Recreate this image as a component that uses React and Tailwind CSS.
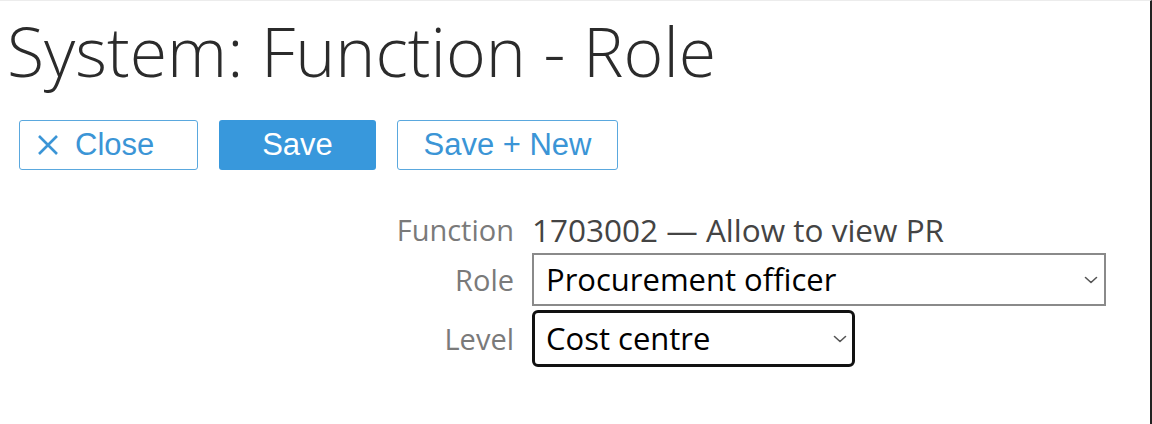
import React from 'react';

const Chevron = () => (
    <svg width="14" height="8" viewBox="0 0 14 8" fill="none" className="pointer-events-none absolute right-[8px] top-1/2 -translate-y-1/2">
        <path d="M1.5 1.5 L7 6.5 L12.5 1.5" stroke="#555" strokeWidth="1.6" strokeLinecap="round" strokeLinejoin="round" />
    </svg>
);

const App = () => {
    return (
        <div className="w-[1152px] h-[424px] bg-white border-t border-[#ececec] border-r-2 border-r-[#222] overflow-hidden relative">
            {/* Title */}
            <h1 className="ml-[7px] mt-[18px] h-[64px] text-[68px] leading-[64px] font-light text-[#2b2b2b] font-['Open_Sans',sans-serif] whitespace-nowrap">
                System: Function - Role
            </h1>

            {/* Buttons */}
            <div className="flex gap-[21px] ml-[19px] mt-[37px] font-['Liberation_Sans',Arial,sans-serif]">
                <button className="w-[179px] h-[50px] border-[1.5px] border-[#5aa8de] rounded-[3px] flex items-center pl-[17px] gap-[16px] text-[31px] text-[#3b95d6] bg-white">
                    <svg width="22" height="22" viewBox="0 0 22 22" className="shrink-0">
                        <path d="M2 2 L20 20 M20 2 L2 20" stroke="#3b95d6" strokeWidth="2.6" />
                    </svg>
                    <span>Close</span>
                </button>
                <button className="w-[157px] h-[50px] rounded-[3px] bg-[#3898dc] text-white text-[31px] flex items-center justify-center">
                    Save
                </button>
                <button className="w-[221px] h-[50px] border-[1.5px] border-[#5aa8de] rounded-[3px] text-[#3b95d6] text-[31px] bg-white flex items-center justify-center">
                    Save + New
                </button>
            </div>

            {/* Form */}
            <div className="mt-[44px] flex flex-col gap-[4px] font-['Open_Sans',sans-serif]">
                <div className="flex items-center h-[32px]">
                    <div className="w-[514px] text-right text-[#7a7a7a] text-[29px]">Function</div>
                    <div className="ml-[18px] text-[#444] text-[31.5px]">1703002 — Allow to view PR</div>
                </div>
                <div className="flex items-center mt-[3px]">
                    <div className="w-[514px] text-right text-[#7a7a7a] text-[29px]">Role</div>
                    <div className="ml-[18px] relative w-[574px] h-[53px]">
                        <select defaultValue="po" className="appearance-none w-full h-full border-2 border-[#8a8a8a] bg-white pl-[12px] text-black text-[31px] outline-none">
                            <option value="po">Procurement officer</option>
                        </select>
                        <Chevron />
                    </div>
                </div>
                <div className="flex items-center">
                    <div className="w-[514px] text-right text-[#7a7a7a] text-[29px]">Level</div>
                    <div className="ml-[18px] relative w-[323px] h-[57px]">
                        <select defaultValue="cc" className="appearance-none w-full h-full border-[3px] border-[#111] rounded-[6px] bg-white pl-[11px] text-black text-[31px] outline-none">
                            <option value="cc">Cost centre</option>
                        </select>
                        <Chevron />
                    </div>
                </div>
            </div>
        </div>
    );
};

export default App;
